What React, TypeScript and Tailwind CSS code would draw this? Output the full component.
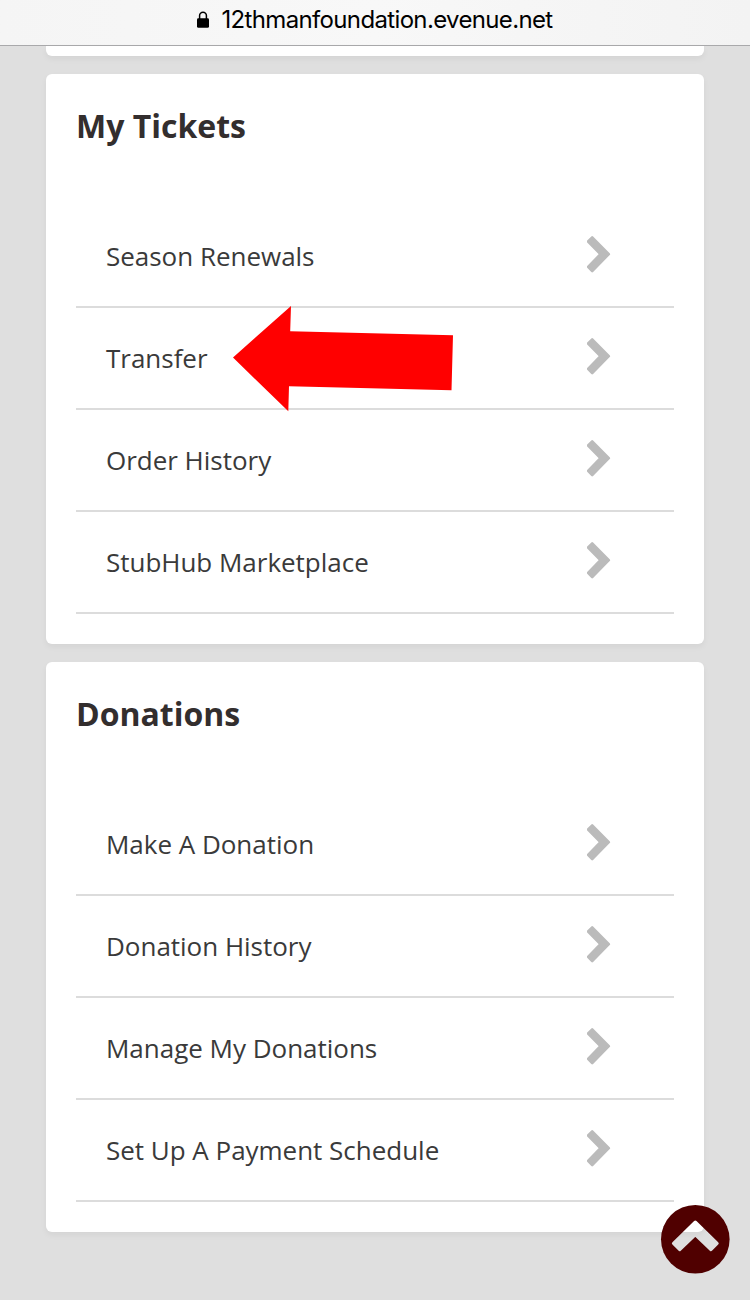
type Section = {
  title: string;
  links: string[];
};

const sections: Section[] = [
  {
    title: "My Tickets",
    links: ["Season Renewals", "Transfer", "Order History", "StubHub Marketplace"],
  },
  {
    title: "Donations",
    links: [
      "Make A Donation",
      "Donation History",
      "Manage My Donations",
      "Set Up A Payment Schedule",
    ],
  },
];

const LockIcon = () => (
  <svg className="h-[17px] w-3" viewBox="0 0 12 17">
    <path d="M2.6 8V4.6a3.4 3.4 0 0 1 6.8 0V8" fill="none" stroke="#000" strokeWidth="1.5" />
    <rect y="7.2" width="12" height="9.6" rx="1.4" />
  </svg>
);

const ChevronRight = () => (
  <svg className="h-[38px] w-6" viewBox="0 0 24 38">
    <path
      d="M5.2 2.4 21.8 19.2 5.2 36 1.1 31.9 13.4 19.2 1.1 6.5Z"
      fill="#bbb"
      stroke="#bbb"
      strokeWidth="2.6"
      strokeLinejoin="round"
    />
  </svg>
);

const TransferArrow = () => (
  <svg className="absolute top-0 left-[156px] h-[106px] w-[222px] -mt-[2px]" viewBox="0 0 222 106">
    <path d="M1 51.5 59 0 58.2 25.2 221 29.3 219.5 84.3 57 80.3 56.3 105.3Z" fill="#f00" />
  </svg>
);

const LinkRow = ({ label }: { label: string }) => (
  <li className="relative flex h-[102px] items-center justify-between border-b-2 border-[#dcdcdc] pr-[63px] pl-[30px]">
    <span className="text-[26px] tracking-[-0.02px] text-[#3a3a3a]">{label}</span>
    <div className="-mt-1">
      <ChevronRight />
    </div>
    {label === "Transfer" && <TransferArrow />}
  </li>
);

const Card = ({ title, links }: Section) => (
  <section className="h-[570px] rounded-md bg-white px-[30px] pt-[31px] shadow-[0_3px_6px_rgba(0,0,0,0.05)]">
    <h2 className="h-[101px] text-[32px] leading-[42px] font-bold text-[#332e2e]">{title}</h2>
    <ul>
      {links.map((label) => (
        <LinkRow key={label} label={label} />
      ))}
    </ul>
  </section>
);

const BackToTop = () => (
  <button className="fixed right-5 bottom-[26px]" aria-label="Back to top">
    <svg className="block h-[70px] w-[70px]" viewBox="0 0 70 70">
      <mask id="chevron">
        <rect width="70" height="70" fill="#fff" />
        <path
          d="M35.3 18.2 57 39.4 51 45.4 35.3 30.4 19.6 45.4 13.6 39.4Z"
          fill="#000"
          stroke="#000"
          strokeWidth="3.4"
          strokeLinejoin="round"
        />
      </mask>
      <circle cx="35.3" cy="35.3" r="34.3" fill="#500000" mask="url(#chevron)" />
    </svg>
  </button>
);

export default function App() {
  return (
    <div className="h-[1300px] overflow-hidden bg-[#dfdfdf] font-['Open_Sans','Noto_Sans',sans-serif]">
      <header className="flex h-[46px] items-start justify-center gap-3 border-b border-[#a9a9ab] bg-linear-to-r from-[#f5f5f5] via-[#f8f8f8] to-[#f3f3f3]">
        <div className="mt-[11px]">
          <LockIcon />
        </div>
        <span className="mt-1 font-['Inter',sans-serif] text-[24px] leading-8 tracking-[-0.65px] text-black">
          12thmanfoundation.evenue.net
        </span>
      </header>
      <main className="flex flex-col gap-[18px] px-[46px]">
        <div className="h-[10px] rounded-b-md bg-white shadow-[0_3px_6px_rgba(0,0,0,0.05)]" />
        {sections.map((section) => (
          <Card key={section.title} {...section} />
        ))}
      </main>
      <BackToTop />
    </div>
  );
}
